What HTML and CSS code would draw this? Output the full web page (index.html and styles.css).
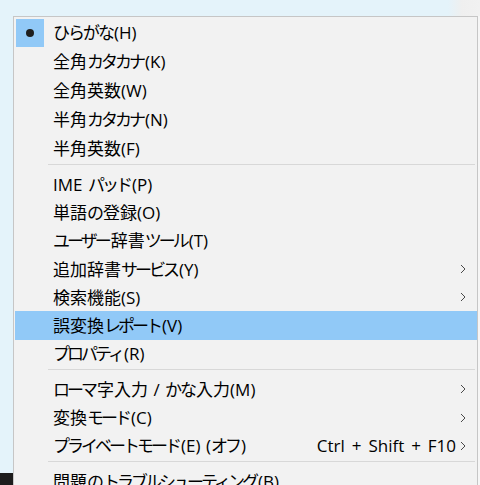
FILE: index.html
```html
<!DOCTYPE html>
<html lang="ja">
<head>
<meta charset="utf-8">
<link rel="stylesheet" href="styles.css">
</head>
<body>
<div class="screen">
  <div class="top"></div>
  <div class="side"></div>
  <div class="menu">
    <div class="group g1">
      <div class="item"><span class="check"><span class="dot"></span></span><span class="label"><span class="hi">ひらがな</span>(H)</span></div>
      <div class="item"><span class="check"></span><span class="label">全角<span class="ka">カタカナ</span>(K)</span></div>
      <div class="item"><span class="check"></span><span class="label">全角英数(W)</span></div>
      <div class="item"><span class="check"></span><span class="label">半角<span class="ka">カタカナ</span>(N)</span></div>
      <div class="item"><span class="check"></span><span class="label">半角英数(F)</span></div>
    </div>
    <div class="sep"></div>
    <div class="group">
      <div class="item"><span class="check"></span><span class="label">IME <span class="ka">パッド</span>(P)</span></div>
      <div class="item"><span class="check"></span><span class="label">単語<span class="hi">の</span>登録(O)</span></div>
      <div class="item"><span class="check"></span><span class="label"><span class="ka">ユーザー</span>辞書<span class="ka">ツール</span>(T)</span></div>
      <div class="item"><span class="check"></span><span class="label">追加辞書<span class="ka">サービス</span>(Y)</span><span class="key"></span><svg class="chev" viewBox="0 0 6 10" width="6" height="10"><polyline points="1,1 5,5 1,9"/></svg></div>
      <div class="item"><span class="check"></span><span class="label">検索機能(S)</span><span class="key"></span><svg class="chev" viewBox="0 0 6 10" width="6" height="10"><polyline points="1,1 5,5 1,9"/></svg></div>
      <div class="item active"><span class="check"></span><span class="label">誤変換<span class="ka">レポート</span>(V)</span></div>
      <div class="item"><span class="check"></span><span class="label"><span class="ka">プロパティ</span>(R)</span></div>
    </div>
    <div class="sep"></div>
    <div class="group">
      <div class="item"><span class="check"></span><span class="label"><span class="ka">ローマ</span>字入力 / <span class="hi">かな</span>入力(M)</span><span class="key"></span><svg class="chev" viewBox="0 0 6 10" width="6" height="10"><polyline points="1,1 5,5 1,9"/></svg></div>
      <div class="item"><span class="check"></span><span class="label">変換<span class="ka">モード</span>(C)</span><span class="key"></span><svg class="chev" viewBox="0 0 6 10" width="6" height="10"><polyline points="1,1 5,5 1,9"/></svg></div>
      <div class="item"><span class="check"></span><span class="label"><span class="ka">プライベートモード</span>(E) (<span class="ka">オフ</span>)</span><span class="key">Ctrl + Shift + F10</span><svg class="chev" viewBox="0 0 6 10" width="6" height="10"><polyline points="1,1 5,5 1,9"/></svg></div>
    </div>
    <div class="sep"></div>
    <div class="group">
      <div class="item"><span class="check"></span><span class="label">問題<span class="hi">の</span><span class="ka">トラブルシューティング</span>(B)</span></div>
    </div>
  </div>
  <div class="edge"></div>
</div>
</body>
</html>
```
FILE: styles.css
```css
html, body {
  margin: 0;
  padding: 0;
  background: #e4f3fa;
}

.screen {
  width: 480px;
  height: 485px;
  overflow: hidden;
  display: grid;
  grid-template-columns: 13px 465px 1fr;
  grid-template-rows: 16px 1fr;
  font-family: "Open Sans", "Noto Sans CJK JP", sans-serif;
}

.top {
  grid-column: 1 / 4;
  background: linear-gradient(to right, #e4f3fa 0, #e4f3fa 448px, #efefef 462px, #f1f1f1 480px);
}

.side {
  background: linear-gradient(to bottom, #e4f3fa 0, #e4f3fa 457px, #1c1c1c 457px);
}

.edge {
  background: #f6f6f6;
}

.menu {
  background: #f2f2f2;
  border: 1px solid #c6c6c6;
  border-bottom: none;
  padding: 1px 0 0 1px;
  display: flex;
  flex-direction: column;
  min-height: 0;
}

.group {
  display: flex;
  flex-direction: column;
}

.item {
  height: 28.3px;
  flex: none;
  display: grid;
  grid-template-columns: 38px 1fr auto 8px;
  align-items: center;
  padding-right: 9px;
  font-size: 17px;
  line-height: 1;
  color: #000;
}

.g1 .item {
  height: 29px;
}

.item.active {
  background: #91c9f7;
}

.check {
  width: 28px;
  height: 28px;
  margin-left: 1px;
  display: flex;
  align-items: center;
  justify-content: center;
}

.g1 .item:first-child .check {
  background: #91c9f7;
}

.dot {
  width: 8px;
  height: 8px;
  border-radius: 50%;
  background: #1e1e1e;
}

.label {
  white-space: pre;
  word-spacing: 1px;
}

.hi {
  letter-spacing: -2px;
  padding-right: 1px;
}

.ka {
  letter-spacing: -3px;
  padding-right: 2px;
}

.key {
  white-space: nowrap;
  padding-right: 4px;
  word-spacing: 2.5px;
}

.chev {
  fill: none;
  stroke: #4a4a4a;
  stroke-width: 1;
}

.sep {
  height: 1px;
  flex: none;
  background: #d8d8d8;
  margin: 1px 2px 5px 33px;
}
```
